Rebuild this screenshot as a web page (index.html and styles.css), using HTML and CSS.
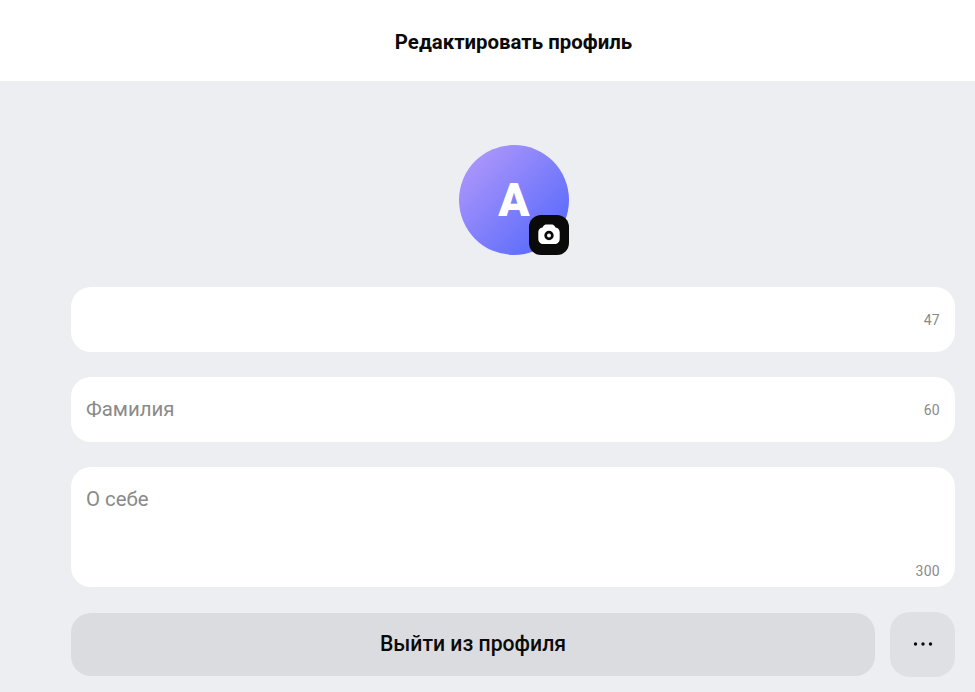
FILE: index.html
```html
<!DOCTYPE html>
<html lang="ru">
<head>
    <meta charset="UTF-8">
    <meta name="viewport" content="width=device-width, initial-scale=1.0">
    <title>Редактировать профиль</title>
    <link rel="stylesheet" href="styles.css">
</head>
<body>

<header class="topbar">
    <h1 class="topbar-title">Редактировать профиль</h1>
</header>

<main class="content">
    <div class="avatar">
        <span class="avatar-letter">A</span>
        <button class="avatar-btn" aria-label="Сменить фото">
            <svg width="24" height="24" viewBox="0 0 24 24">
                <path fill="#fff" fill-rule="evenodd" d="M9.500 1.500h5c1.500 0 2.400.6 3.100 1.600l.9 1.300c2.600.3 4.200 2 4.200 4.800v6.300c0 3.600-1.900 5.500-5.500 5.500H6.800C3.200 21 1.300 19.100 1.300 15.500V9.200c0-2.800 1.600-4.500 4.200-4.800l.9-1.300c.7-1 1.600-1.600 3.100-1.600zM12 7.800a4.700 4.700 0 1 0 0 9.400 4.700 4.700 0 0 0 0-9.400zm0 2.700a2 2 0 1 1 0 4 2 2 0 0 1 0-4z"/>
            </svg>
        </button>
    </div>

    <div class="field field-name">
        <input class="field-input" type="text">
        <span class="counter">47</span>
    </div>
    <div class="field field-name">
        <input class="field-input" type="text" placeholder="Фамилия">
        <span class="counter">60</span>
    </div>
    <div class="field field-about">
        <textarea class="field-input field-textarea" placeholder="О себе"></textarea>
        <span class="counter">300</span>
    </div>

    <div class="actions">
        <button class="logout-btn">Выйти из профиля</button>
        <button class="more-btn" aria-label="Ещё">
            <svg width="20" height="4" viewBox="0 0 20 4">
                <circle cx="2.500" cy="2" r="1.700" fill="#0a0a0a"/>
                <circle cx="10" cy="2" r="1.700" fill="#0a0a0a"/>
                <circle cx="17.500" cy="2" r="1.700" fill="#0a0a0a"/>
            </svg>
        </button>
    </div>
</main>

</body>
</html>
```

FILE: styles.css
```css
* {
    box-sizing: border-box;
}

body {
    margin: 0;
    height: 692px;
    overflow: hidden;
    background-color: #edeef2;
    font-family: Roboto, "Liberation Sans", sans-serif;
    color: #0a0a0a;
}

.topbar {
    height: 81px;
    background-color: #fff;
    display: flex;
    justify-content: center;
    align-items: center;
    padding: 2px 0 0 52px;
}

.topbar-title {
    margin: 0;
    font-size: 20.400px;
    font-weight: 700;
    line-height: 24px;
}

.content {
    padding: 64px 20px 0 71px;
}

.avatar {
    position: relative;
    width: 110px;
    height: 110px;
    margin: 0 0 32px 388px;
    border-radius: 50%;
    background: linear-gradient(135deg, #b89cfb 0%, #5c6cfb 85%);
    display: flex;
    justify-content: center;
    align-items: center;
}

.avatar-letter {
    color: #fff;
    font-size: 46px;
    font-weight: 900;
    line-height: 1;
}

.avatar-btn {
    position: absolute;
    right: 0;
    bottom: 0;
    width: 40px;
    height: 40px;
    padding: 0;
    border: none;
    border-radius: 12px;
    background-color: #0a0a0a;
    display: flex;
    justify-content: center;
    align-items: center;
}

.field {
    position: relative;
    background-color: #fff;
    border-radius: 20px;
    margin-bottom: 25px;
}

.field-name {
    height: 65px;
}

.field-about {
    height: 120px;
}

.field-input {
    display: block;
    width: 100%;
    height: 100%;
    border: none;
    outline: none;
    background: none;
    padding: 0 60px 2px 15px;
    font-family: inherit;
    font-size: 20.400px;
    color: #0a0a0a;
}

.field-input::placeholder {
    color: #8a8a8a;
    opacity: 1;
}

.field-textarea {
    padding-top: 20px;
    resize: none;
    line-height: 24px;
}

.counter {
    position: absolute;
    right: 15px;
    bottom: 24px;
    font-size: 14px;
    line-height: 16px;
    letter-spacing: 0.3px;
    color: #8a8a8a;
}

.field-about .counter {
    bottom: 8px;
}

.actions {
    display: flex;
    align-items: center;
    gap: 15px;
}

.logout-btn {
    flex: 1;
    height: 63px;
    padding: 0 0 2px;
    border: none;
    border-radius: 20px;
    background-color: #dbdce0;
    color: #0a0a0a;
    font-family: inherit;
    font-size: 21.200px;
    font-weight: 500;
    cursor: pointer;
}

.more-btn {
    width: 65px;
    height: 65px;
    padding: 0 0 2px;
    border: none;
    border-radius: 20px;
    background-color: #dfe0e4;
    display: flex;
    justify-content: center;
    align-items: center;
    cursor: pointer;
}
```
